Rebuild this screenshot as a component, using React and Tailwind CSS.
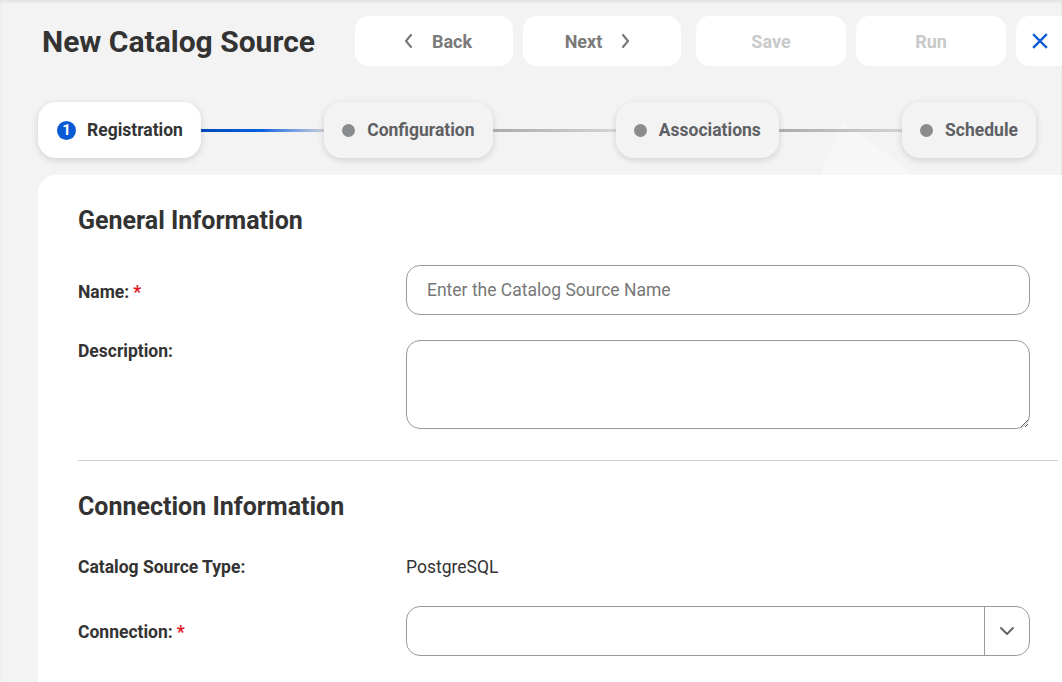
import React from 'react';

const font = { fontFamily: 'Roboto, "Liberation Sans", sans-serif' };

const ChevronLeft = () => (
  <svg width="12" height="16" viewBox="0 0 12 16" fill="none" stroke="currentColor" strokeWidth="2.2" strokeLinecap="round" strokeLinejoin="round">
    <path d="M8 2L3 8l5 6" />
  </svg>
);

const ChevronRight = () => (
  <svg width="12" height="16" viewBox="0 0 12 16" fill="none" stroke="currentColor" strokeWidth="2.2" strokeLinecap="round" strokeLinejoin="round">
    <path d="M4 2l5 6-5 6" />
  </svg>
);

// header action button
const ActionButton = ({ children, className }) => (
  <button className={`h-[50px] rounded-[14px] bg-white flex items-center justify-center gap-[17px] text-[18px] font-bold ${className}`}>
    {children}
  </button>
);

// step pill in the wizard
const Step = ({ label, active, index }) => (
  <div
    className={`h-[56px] rounded-[18px] flex items-center pr-[18px] shadow-[0_2px_7px_rgba(0,0,0,0.14)] flex-none ${
      active ? 'bg-white pl-[19px] gap-[11px]' : 'bg-[#f3f3f3] pl-[18px] gap-[12px]'
    }`}
  >
    {active ? (
      <span className="w-[19px] h-[19px] rounded-full bg-[#0a5ad6] text-white text-[15px] font-bold flex items-center justify-center leading-none">
        {index}
      </span>
    ) : (
      <span className="w-[13px] h-[13px] rounded-full bg-[#8a8b8d]" />
    )}
    <span className={`text-[17.5px] font-bold leading-none pt-[2px] ${active ? 'text-[#333]' : 'text-[#5f6063]'}`}>{label}</span>
  </div>
);

const Label = ({ children, required, className = '' }) => (
  <div className={`w-[328px] flex-none text-[17.5px] font-bold text-[#333] ${className}`}>
    {children}
    {required && <span className="text-[#e0141e] ml-1">*</span>}
  </div>
);

export default function App() {
  return (
    <div style={font} className="relative w-[1062px] h-[682px] overflow-hidden bg-[#f3f3f3] shadow-[inset_0_2px_3px_rgba(0,0,0,0.07)]">
      {/* faint background shape */}
      <svg className="absolute left-0 top-0" width="1062" height="180">
        <polygon points="843,121 915,175 820,175" fill="#f7f7f7" />
      </svg>

      {/* --- Header --- */}
      <header className="relative flex items-center pt-[16px]">
        <h1 className="w-[355px] flex-none pl-[42px] text-[30px] font-bold text-[#333]">
          New Catalog Source
        </h1>
        <div className="flex items-center">
          <ActionButton className="w-[158px] text-[#7a7a7a] pl-[7px]">
            <ChevronLeft />
            <span>Back</span>
          </ActionButton>
          <ActionButton className="w-[158px] ml-[10px] text-[#7a7a7a] pr-[8px]">
            <span>Next</span>
            <ChevronRight />
          </ActionButton>
          <ActionButton className="w-[150px] ml-[15px] text-[#c9c9c9]">Save</ActionButton>
          <ActionButton className="w-[150px] ml-[10px] text-[#c9c9c9]">Run</ActionButton>
          <button className="w-[50px] h-[50px] ml-[10px] rounded-l-[14px] bg-white flex items-center pl-[15px] text-[#0b5ad4] flex-none">
            <svg width="18" height="18" viewBox="0 0 18 18" stroke="currentColor" strokeWidth="2.4" strokeLinecap="square">
              <path d="M3 3l12 12M15 3L3 15" />
            </svg>
          </button>
        </div>
      </header>

      {/* --- Steps --- */}
      <div className="relative flex items-center mt-[36px] pl-[38px] pr-[26px]">
        <Step label="Registration" active index="1" />
        <div className="flex-1 h-[3px] bg-gradient-to-r from-[#0047b8] via-[#0a62e0] to-[#c9ced6]" />
        <Step label="Configuration" />
        <div className="flex-1 h-[3px] bg-gradient-to-r from-[#a9abad] to-[#d3d4d5]" />
        <Step label="Associations" />
        <div className="flex-1 h-[3px] bg-gradient-to-r from-[#a9abad] to-[#d3d4d5]" />
        <Step label="Schedule" />
      </div>

      {/* --- Form card --- */}
      <main className="relative mt-[17px] ml-[38px] bg-white rounded-tl-[18px] pl-[40px] pr-[4px] pt-[31px] h-[600px]">
        <h2 className="text-[25px] font-bold text-[#333] leading-[30px]">General Information</h2>

        <div className="flex items-center mt-[29px]">
          <Label required className="pt-[4px]">Name:</Label>
          <input
            placeholder="Enter the Catalog Source Name"
            className="w-[624px] h-[50px] rounded-[14px] border border-[#9a9a9a] px-[20px] text-[17.5px] text-[#333] placeholder:text-[#777] outline-none"
          />
        </div>

        <div className="flex items-start mt-[25px]">
          <Label className="-mt-[2px]">Description:</Label>
          <textarea className="w-[624px] h-[89px] rounded-[14px] border border-[#9a9a9a] px-[20px] py-[12px] text-[17px] outline-none resize-y" />
        </div>

        <div className="h-px bg-[#d2d2d2] mt-[31px]" />

        <h2 className="text-[25px] font-bold text-[#333] leading-[30px] mt-[31px]">Connection Information</h2>

        <div className="flex items-center mt-[32px]">
          <Label>Catalog Source Type:</Label>
          <span className="text-[17.5px] text-[#333]">PostgreSQL</span>
        </div>

        <div className="flex items-center mt-[26px]">
          <Label required className="pt-[2px]">Connection:</Label>
          <div className="w-[624px] h-[50px] rounded-[14px] border border-[#9a9a9a] flex">
            <div className="flex-1" />
            <div className="w-[45px] border-l border-[#9a9a9a] flex items-center justify-center text-[#666]">
              <svg width="16" height="10" viewBox="0 0 16 10" fill="none" stroke="currentColor" strokeWidth="2" strokeLinecap="round" strokeLinejoin="round">
                <path d="M2 2l6 6 6-6" />
              </svg>
            </div>
          </div>
        </div>
      </main>
    </div>
  );
}
